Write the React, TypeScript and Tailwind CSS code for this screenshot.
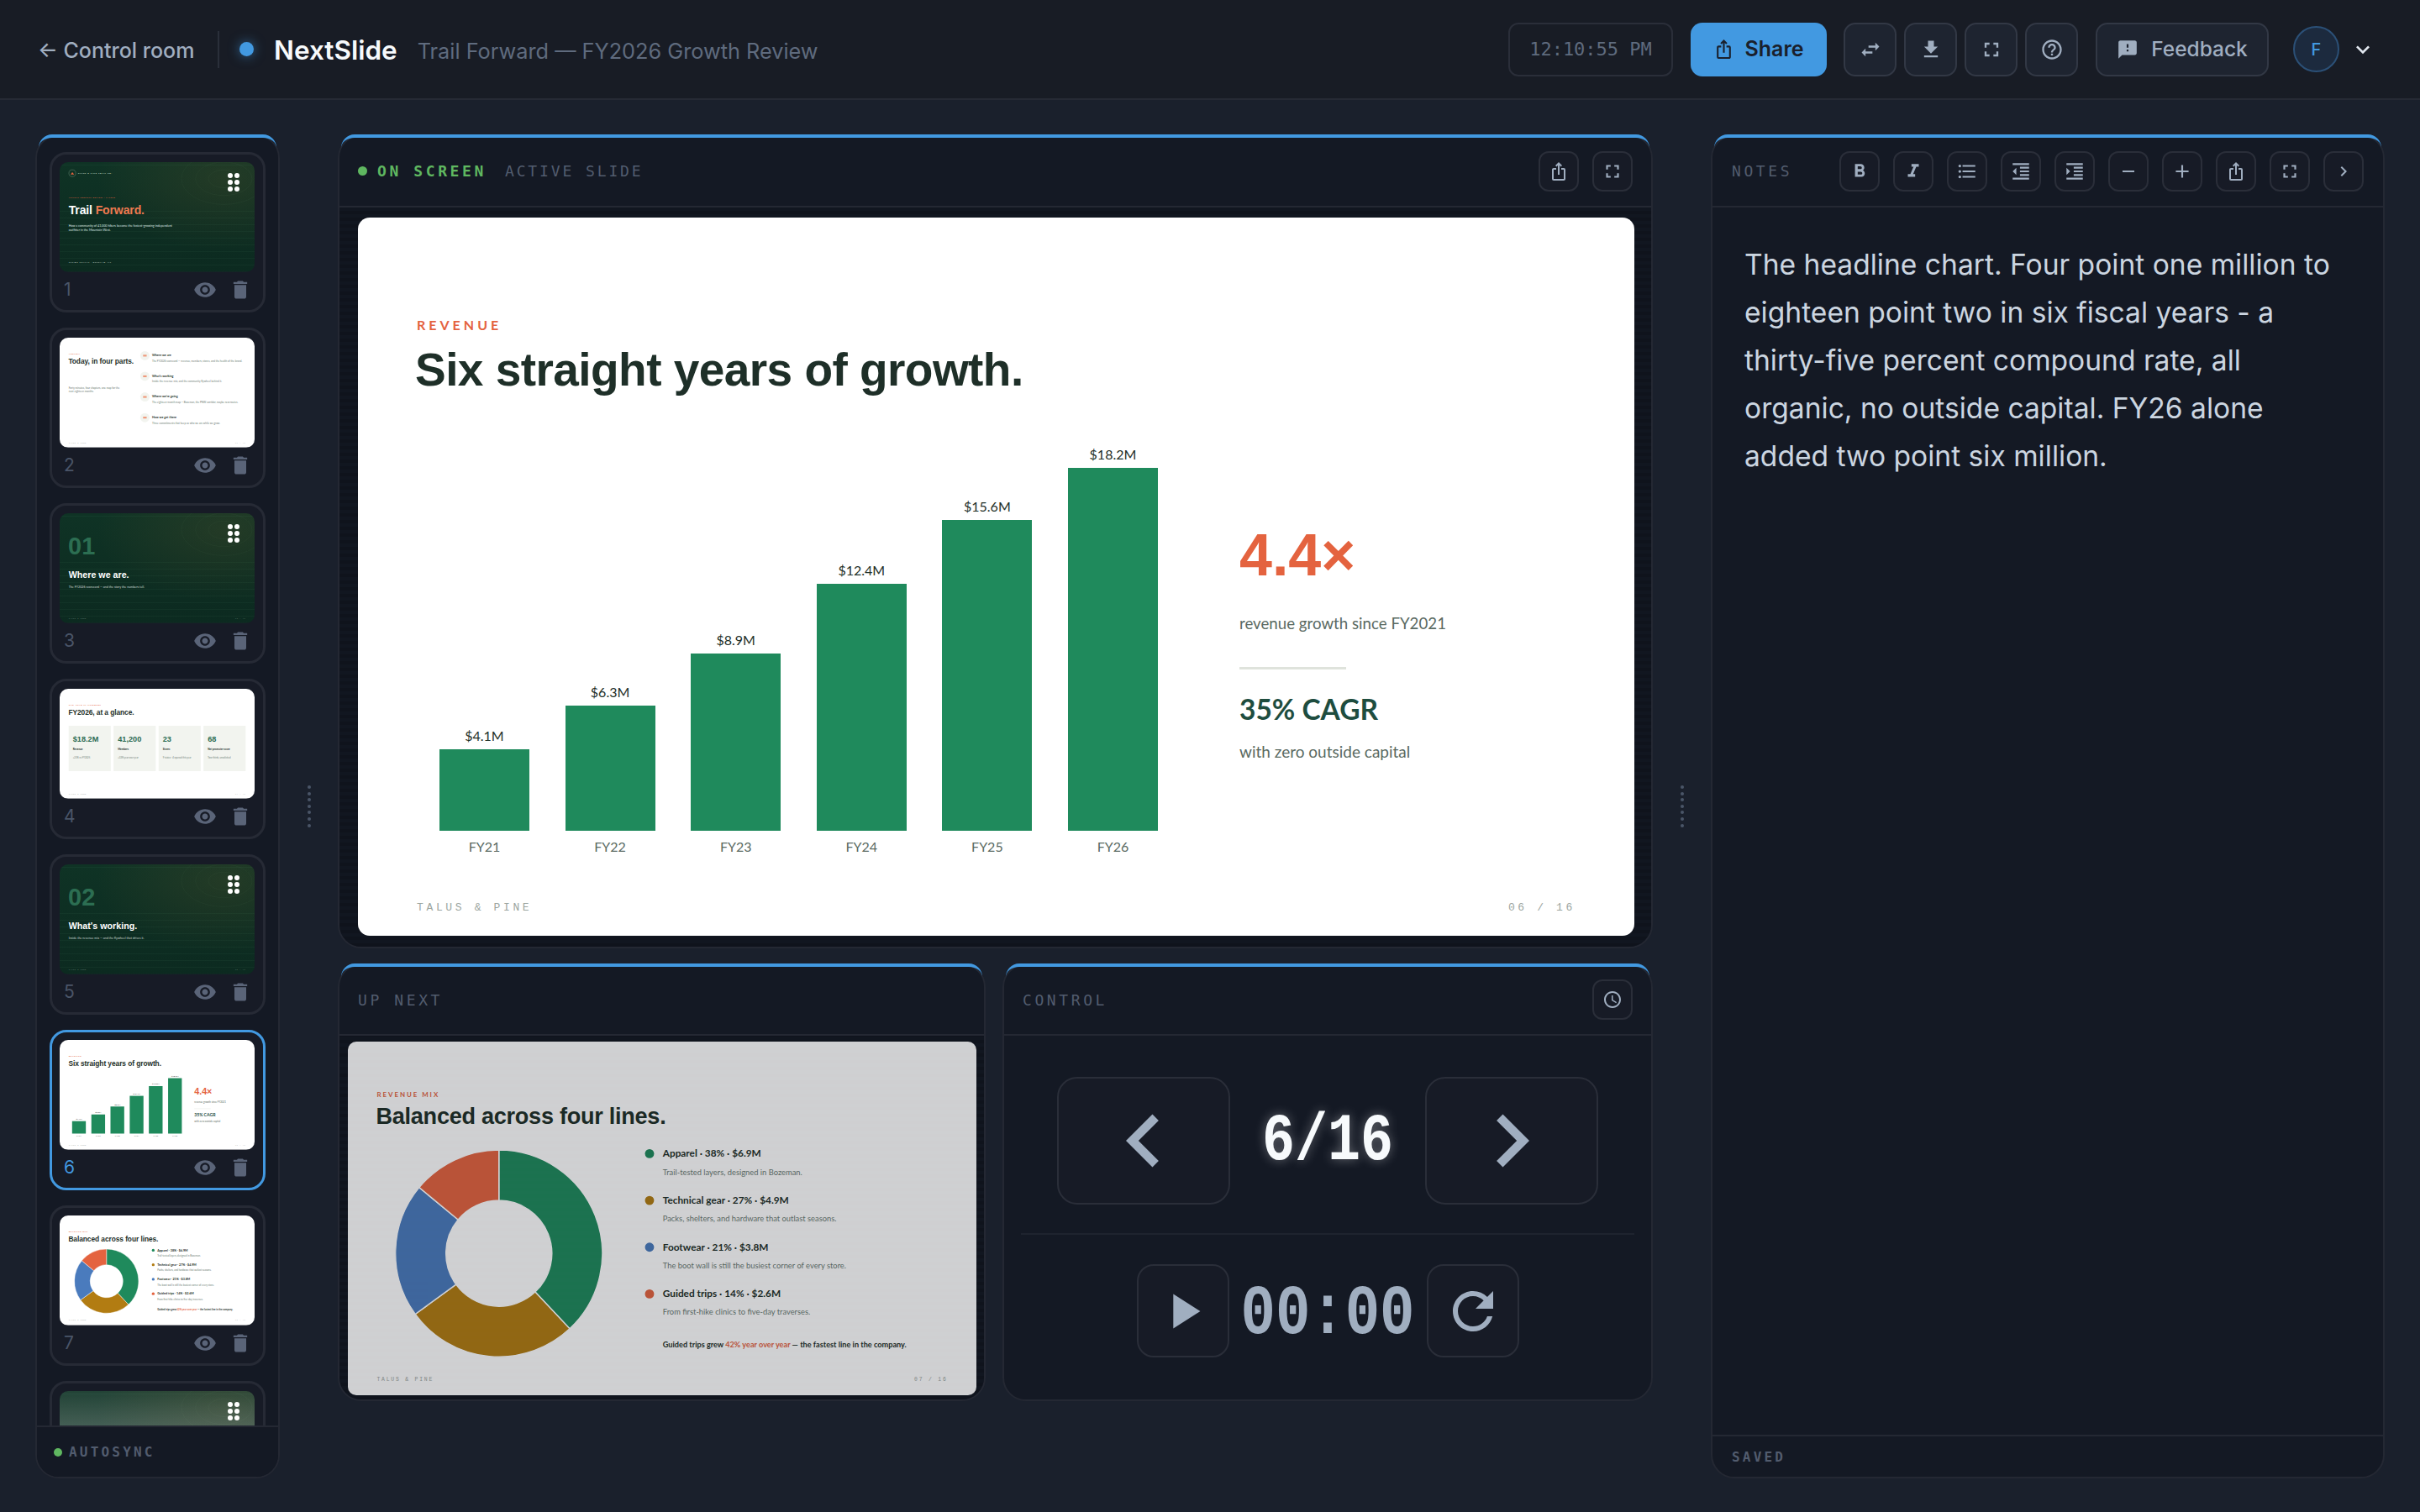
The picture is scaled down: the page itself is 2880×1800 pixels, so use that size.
import React from 'react';
import {
  MdIosShare, MdFullscreen, MdSwapHoriz, MdFileDownload, MdHelpOutline, MdFeedback, MdKeyboardArrowDown,
  MdVisibility, MdDelete, MdFormatBold, MdFormatItalic, MdFormatListBulleted, MdFormatIndentDecrease,
  MdFormatIndentIncrease, MdRemove, MdAdd, MdChevronRight, MdChevronLeft, MdAccessTime, MdPlayArrow, MdRefresh,
} from 'react-icons/md';

const BASE_W = 1519;
const BASE_H = 855;

function Frame({ w, radius, dim, children }: { w: number; radius: string; dim?: boolean; children: React.ReactNode }) {
  const s = w / BASE_W;
  return (
    <div className={`overflow-hidden shrink-0 ${radius} ${dim ? 'opacity-80' : ''}`} style={{ width: w, height: Math.round(BASE_H * s) }}>
      <div className="w-[1519px] h-[855px] origin-top-left" style={{ transform: `scale(${s})` }}>
        {children}
      </div>
    </div>
  );
}

function SlideFooter({ n, dark }: { n: string; dark?: boolean }) {
  return (
    <div className={`flex justify-between px-[70px] text-[13px] leading-[18px] tracking-[0.28em] [font-family:'Liberation_Mono',monospace] ${dark ? 'text-[#6f8f80]' : 'text-[#9ca5a0]'}`}>
      <span>TALUS &amp; PINE</span>
      <span>{n} / 16</span>
    </div>
  );
}

function WhiteHead({ eyebrow, title }: { eyebrow: string; title: string }) {
  return (
    <div className="px-[70px] pt-[117px] whitespace-nowrap">
      <div className="h-[22px] text-[16px] leading-[22px] font-bold tracking-[0.25em] text-[#e4633f] [font-family:'Lato',sans-serif]">{eyebrow}</div>
      <div className="mt-[9px] h-[66px] text-[55px] leading-[66px] font-bold text-[#1e2f28] tracking-[-0.01em] ml-[-2px] [font-family:'Liberation_Sans',sans-serif]">{title}</div>
    </div>
  );
}

const bars = [
  ['FY21', '$4.1M', 97.5], ['FY22', '$6.3M', 149.5], ['FY23', '$8.9M', 211], ['FY24', '$12.4M', 294], ['FY25', '$15.6M', 370], ['FY26', '$18.2M', 432],
] as const;

function SlideRevenue() {
  return (
    <div className="w-full h-full bg-white flex flex-col [font-family:'Lato',sans-serif]">
      <WhiteHead eyebrow="REVENUE" title="Six straight years of growth." />
      <div className="flex items-end h-[545px] pl-[97px]">
        <div className="flex gap-[42.6px] items-end">
          {bars.map(([fy, val, h]) => (
            <div key={fy} className="w-[107px] flex flex-col items-center">
              <div className="text-[16px] leading-[20px] mb-[6px] text-[#1e2f28]">{val}</div>
              <div className="w-full bg-[#1f8a5c]" style={{ height: h }} />
              <div className="mt-[9px] h-[20px] text-[16px] leading-[20px] text-[#5a6a62]">{fy}</div>
            </div>
          ))}
        </div>
        <div className="ml-[97px] self-start mt-[148px] flex flex-col">
          <div className="text-[70px] leading-[80px] font-bold text-[#e4633f] [font-family:'Liberation_Sans',sans-serif]">4.4×</div>
          <div className="mt-[29px] text-[18.7px] leading-[24px] text-[#5a6a62]">revenue growth since FY2021</div>
          <div className="mt-[40px] w-[127px] h-[3px] bg-[#dfe3dc]" />
          <div className="mt-[27px] text-[33.5px] leading-[40px] font-bold text-[#1e4d3f]">35% CAGR</div>
          <div className="mt-[19px] text-[19px] leading-[24px] text-[#5a6a62]">with zero outside capital</div>
        </div>
      </div>
      <div className="mt-[54px]"><SlideFooter n="06" /></div>
    </div>
  );
}

const donut = [
  [0, 0.38, '#1f8a5c'], [0.38, 0.65, '#b27c12'], [0.65, 0.86, '#4a7bbd'], [0.86, 1, '#e4633f'],
] as const;

function arc(a: number, b: number) {
  const R = 250, r = 128, c = 250;
  const p = (t: number, rad: number) => {
    const ang = t * 2 * Math.PI - Math.PI / 2;
    return `${(c + rad * Math.cos(ang)).toFixed(2)} ${(c + rad * Math.sin(ang)).toFixed(2)}`;
  };
  const large = b - a > 0.5 ? 1 : 0;
  return `M${p(a, R)} A${R} ${R} 0 ${large} 1 ${p(b, R)} L${p(b, r)} A${r} ${r} 0 ${large} 0 ${p(a, r)} Z`;
}

const legend = [
  ['#1f8a5c', 'Apparel · 38% · $6.9M', 'Trail-tested layers, designed in Bozeman.'],
  ['#b27c12', 'Technical gear · 27% · $4.9M', 'Packs, shelters, and hardware that outlast seasons.'],
  ['#4a7bbd', 'Footwear · 21% · $3.8M', 'The boot wall is still the busiest corner of every store.'],
  ['#e4633f', 'Guided trips · 14% · $2.6M', 'From first-hike clinics to five-day traverses.'],
] as const;

function SlideMix() {
  return (
    <div className="w-full h-full bg-white flex flex-col [font-family:'Lato',sans-serif]">
      <WhiteHead eyebrow="REVENUE MIX" title="Balanced across four lines." />
      <div className="flex h-[598px] pl-[115px] pt-[48px]">
        <svg width="500" height="500" viewBox="0 0 500 500" className="shrink-0">
          {donut.map(([a, b, c]) => (
            <path key={c} d={arc(a, b)} fill={c} stroke="#fff" strokeWidth="3" />
          ))}
        </svg>
        <div className="ml-[103px] flex flex-col">
          {legend.map(([c, t, d]) => (
            <div key={t} className="h-[113px] flex">
              <div className="w-[22px] h-[22px] rounded-full mt-[-2px] shrink-0" style={{ background: c }} />
              <div className="ml-[21px] whitespace-nowrap">
                <div className="text-[24px] leading-[24px] font-bold text-[#1e2f28] mt-[-4px]">{t}</div>
                <div className="mt-[22px] text-[19px] leading-[22px] text-[#6b7a72]">{d}</div>
              </div>
            </div>
          ))}
          <div className="ml-[43px] mt-[7px] text-[18.6px] leading-[24px] font-bold text-[#1e2f28] whitespace-nowrap">
            Guided trips grew <span className="text-[#e4633f]">42% year over year</span> — the fastest line in the company.
          </div>
        </div>
      </div>
      <div className="mt-[-3px]"><SlideFooter n="07" /></div>
    </div>
  );
}

function DarkBg({ children, lit }: { children?: React.ReactNode; lit?: boolean }) {
  return (
    <div className="relative w-full h-full flex flex-col overflow-hidden bg-[linear-gradient(180deg,#0f3325_0%,#0c2a20_100%)] [font-family:'Liberation_Sans',sans-serif]">
      <div className="absolute inset-0 bg-[radial-gradient(ellipse_at_85%_15%,rgba(180,120,50,0.13),rgba(180,120,50,0)_55%)]" />
      <div className="absolute inset-0 bg-[repeating-linear-gradient(0deg,rgba(120,200,150,0.05)_0px,rgba(120,200,150,0.05)_4px,rgba(0,0,0,0)_4px,rgba(0,0,0,0)_52px)]" />
      <svg className="absolute right-0 top-0" width="800" height="500" viewBox="0 0 800 500" fill="none" stroke="#8fbf9c" strokeOpacity="0.08" strokeWidth="4">
        <ellipse cx="560" cy="130" rx="120" ry="70" /><ellipse cx="560" cy="130" rx="220" ry="130" /><ellipse cx="560" cy="130" rx="330" ry="200" />
      </svg>
      {lit && <div className="absolute inset-0 bg-[linear-gradient(180deg,rgba(255,255,255,0.08)_0%,rgba(255,255,255,0.24)_35%)]" />}
      <div className="relative flex flex-col h-full">{children}</div>
    </div>
  );
}

function SlideCover() {
  return (
    <DarkBg>
      <div className="flex items-center pl-[70px] pt-[58px]">
        <div className="w-[57px] h-[57px] rounded-full border-[4px] border-[#5a7a68] flex items-center justify-center">
          <div className="w-0 h-0 border-x-[14px] border-x-transparent border-b-[18px] border-b-[#e4633f]" />
        </div>
        <div className="ml-[15px] text-[15px] tracking-[0.3em] font-bold text-[#d8e4dc] [font-family:'Lato',sans-serif]">TALUS &amp; PINE TRAIL CO.</div>
      </div>
      <div className="pl-[70px] mt-[152px] text-[15px] leading-[20px] font-bold tracking-[0.24em] text-[#e4633f] [font-family:'Lato',sans-serif]">ANNUAL GROWTH REVIEW · FY2026</div>
      <div className="pl-[70px] mt-[33px] text-[92px] leading-[110px] font-bold text-white tracking-[-0.01em]">Trail <span className="text-[#ee7a50]">Forward.</span></div>
      <div className="pl-[70px] mt-[52px] w-[920px] text-[24px] leading-[32px] text-[#dfe8e2] [font-family:'Lato',sans-serif]">How a community of 41,000 hikers became the fastest-growing independent outfitter in the Mountain West.</div>
      <div className="pl-[70px] mt-[226px] text-[15px] leading-[18px] tracking-[0.25em] text-[#b9c9bf] [font-family:'Lato',sans-serif]">SPRING SUMMIT · BOZEMAN, MT</div>
    </DarkBg>
  );
}

function SlideSection({ num, title, sub, n }: { num: string; title: string; sub: string; n: string }) {
  return (
    <DarkBg>
      <div className="pl-[66px] pt-[150px] text-[190px] leading-[210px] font-bold text-[#2c6e52]">{num}</div>
      <div className="pl-[70px] mt-[76px] text-[70px] leading-[84px] font-bold text-white">{title}</div>
      <div className="pl-[70px] mt-[36px] text-[24px] leading-[32px] text-[#cfdcd4] [font-family:'Lato',sans-serif]">{sub}</div>
      <div className="mt-auto pb-[26px]"><SlideFooter n={n} dark /></div>
    </DarkBg>
  );
}

const agenda = [
  ['Where we are', 'The FY2026 scorecard — revenue, members, stores, and the health of the brand.'],
  ["What's working", 'Inside the revenue mix, and the community flywheel behind it.'],
  ["Where we're going", 'The eighteen-month map — Bozeman, the PNW corridor, maybe new routes.'],
  ['How we get there', 'Three commitments that keep us who we are while we grow.'],
] as const;

function SlideAgenda() {
  return (
    <div className="w-full h-full bg-white flex flex-col [font-family:'Lato',sans-serif]">
      <div className="flex h-[812px]">
        <div className="w-[628px] shrink-0">
          <WhiteHead eyebrow="AGENDA" title="Today, in four parts." />
          <div className="pl-[70px] mt-[164px] w-[490px] text-[20px] leading-[26px] text-[#6b7a72]">Forty minutes, four chapters, one map for the next eighteen months.</div>
        </div>
        <div className="pt-[104px] flex flex-col">
          {agenda.map(([t, d]) => (
            <div key={t} className="h-[161px] flex">
              <div className="w-[72px] h-[72px] rounded-full bg-[#f2f4ef] flex items-center justify-center shrink-0">
                <div className="w-[28px] h-[14px] bg-[#ee9a7c]" />
              </div>
              <div className="ml-[20px] whitespace-nowrap">
                <div className="mt-[16px] text-[24px] leading-[30px] font-bold text-[#1e2f28]">{t}</div>
                <div className="mt-[18px] text-[20px] leading-[26px] text-[#6b7a72]">{d}</div>
              </div>
            </div>
          ))}
        </div>
      </div>
      <SlideFooter n="02" />
    </div>
  );
}

const stats = [
  ['$18.2M', 'Revenue', '+23% vs FY2025'], ['41,200', 'Members', '+32% year over year'],
  ['23', 'Stores', '9 states · 4 opened this year'], ['68', 'Net promoter score', 'Two-thirds, unsolicited'],
] as const;

function SlideGlance() {
  return (
    <div className="w-full h-full bg-white flex flex-col [font-family:'Lato',sans-serif]">
      <WhiteHead eyebrow="THE YEAR IN NUMBERS" title="FY2026, at a glance." />
      <div className="flex gap-[22px] px-[70px] mt-[74px] h-[354px]">
        {stats.map(([v, l, d]) => (
          <div key={l} className="flex-1 bg-[#f2f4ef] px-[33px] pt-[70px]">
            <div className="text-[60px] leading-[70px] font-bold text-[#2b6b52] [font-family:'Liberation_Sans',sans-serif]">{v}</div>
            <div className="mt-[30px] text-[20px] leading-[26px] font-bold text-[#1e2f28] whitespace-nowrap">{l}</div>
            <div className="mt-[41px] text-[18px] leading-[24px] text-[#6b7a72] whitespace-nowrap">{d}</div>
          </div>
        ))}
      </div>
      <div className="mt-[170px]"><SlideFooter n="04" /></div>
    </div>
  );
}

function Grip() {
  return (
    <div className="absolute top-[22px] right-[28px] grid grid-cols-2 gap-x-[2.3px] gap-y-[2.2px]">
      {[0, 1, 2, 3, 4, 5].map((i) => <div key={i} className="w-[6px] h-[6px] rounded-full bg-white" />)}
    </div>
  );
}

const thumbs: { node: React.ReactNode; grip?: boolean }[] = [
  { node: <SlideCover />, grip: true },
  { node: <SlideAgenda /> },
  { node: <SlideSection num="01" title="Where we are." sub="The FY2026 scorecard — and the story the numbers tell." n="03" />, grip: true },
  { node: <SlideGlance /> },
  { node: <SlideSection num="02" title="What's working." sub="Inside the revenue mix — and the flywheel that drives it." n="05" />, grip: true },
  { node: <SlideRevenue /> },
  { node: <SlideMix /> },
  { node: <DarkBg lit />, grip: true },
];

function ThumbCard({ i, node, grip }: { i: number; node: React.ReactNode; grip?: boolean }) {
  const active = i === 5;
  return (
    <div className={`relative shrink-0 h-[191px] rounded-[20px] border-[3px] px-[9px] pt-[9px] bg-[#171b26] ${active ? 'border-[#4299e1]' : 'border-[#262a35]'}`}>
      <Frame w={232} radius="rounded-[10px]">{node}</Frame>
      {grip && <Grip />}
      <div className="flex items-center h-[42px] pl-[5px]">
        <span className={`text-[21px] font-normal ${active ? 'text-[#4299e1]' : 'text-[#4a5568]'}`}>{i + 1}</span>
        <span className="ml-auto text-[#5a6478]"><MdVisibility size={28} /></span>
        <span className="ml-[14px] mr-[4px] text-[#5a6478]"><MdDelete size={28} /></span>
      </div>
    </div>
  );
}

function Panel({ className, children }: { className: string; children: React.ReactNode }) {
  return (
    <section className={`relative flex flex-col rounded-[28px] border-2 border-[#242833] bg-[#141924] ${className}`}>
      <div className="absolute top-[-2px] left-[2px] right-[2px] h-[16px] border-t-[4px] border-[#4299e1] rounded-t-[26px] z-10" />
      <div className="flex-1 min-h-0 flex flex-col overflow-hidden rounded-[26px]">{children}</div>
    </section>
  );
}

const label = "[font-family:'DejaVu_Sans_Mono',monospace] tracking-[0.2em] text-[#525c6e]";

function Tool({ children, className = '' }: { children: React.ReactNode; className?: string }) {
  return (
    <button className={`w-[48px] h-[48px] shrink-0 rounded-[12px] border-2 border-[#2a2e39] bg-[#171b26] text-[#a0aec0] flex items-center justify-center ${className}`}>
      {children}
    </button>
  );
}

function HeadBtn({ children }: { children: React.ReactNode }) {
  return (
    <button className="w-[63px] h-[64px] rounded-[14px] border-2 border-[#323845] bg-[#1e2430] text-[#a0aec0] flex items-center justify-center">
      {children}
    </button>
  );
}

function Handle() {
  return (
    <div className="flex-1 flex flex-col items-center gap-[3.6px] pt-[775px]">
      {[0, 1, 2, 3, 4, 5, 6].map((i) => <div key={i} className="w-[4px] h-[4px] rounded-full bg-[#4a5568]" />)}
    </div>
  );
}

const stage = "bg-[repeating-linear-gradient(0deg,#0f131c_0px,#0f131c_4px,#111620_4px,#111620_8px)]";

export default function App() {
  return (
    <div className="w-[2880px] h-[1800px] overflow-hidden bg-[#1a202c] flex flex-col [font-family:'Inter',sans-serif]">
      <header className="h-[119px] shrink-0 bg-[#181c25] border-b-2 border-[#262a35] flex items-center pl-[45px] pr-[52px]">
        <div className="mt-[4px] text-[25px] font-medium text-[#a0aec0] w-[214px] whitespace-nowrap">← Control room</div>
        <div className="w-[2px] h-[44px] bg-[#2a2f3a]" />
        <div className="ml-[24px] w-[17px] h-[17px] rounded-full bg-[#4299e1] shadow-[0_0_14px_rgba(66,153,225,0.6)]" />
        <div className="mt-[2px] ml-[24px] text-[31.5px] font-semibold text-[#f7fafc]">NextSlide</div>
        <div className="mt-[4px] ml-[24px] text-[25.3px] text-[#5f6b7e]">Trail Forward — FY2026 Growth Review</div>
        <div className="ml-auto flex items-center">
          <div className="w-[196px] h-[64px] rounded-[12px] border-2 border-[#2a2e39] flex items-center justify-center text-[22px] text-[#5f6b7e] [font-family:'DejaVu_Sans_Mono',monospace]">12:10:55 PM</div>
          <button className="ml-[21px] w-[162px] h-[64px] rounded-[14px] bg-[#4299e1] text-[#1a202c] flex items-center justify-center gap-[12px] text-[25px] font-semibold">
            <MdIosShare size={25} />Share
          </button>
          <div className="ml-[20px] flex gap-[9px]">
            <HeadBtn><MdSwapHoriz size={28} /></HeadBtn>
            <HeadBtn><MdFileDownload size={28} /></HeadBtn>
            <HeadBtn><MdFullscreen size={28} /></HeadBtn>
            <HeadBtn><MdHelpOutline size={28} /></HeadBtn>
          </div>
          <button className="ml-[21px] w-[206px] h-[64px] rounded-[14px] border-2 border-[#323845] bg-[#1e2430] text-[#a0aec0] flex items-center justify-center gap-[15px] text-[24.5px] font-medium">
            <MdFeedback size={26} />Feedback
          </button>
          <div className="ml-[29px] w-[55px] h-[55px] rounded-full bg-[#1c2a3e] border-2 border-[#2b5077] text-[#4299e1] flex items-center justify-center text-[20px] font-medium">F</div>
          <span className="ml-[12px] text-[#e2e8f0]"><MdKeyboardArrowDown size={32} /></span>
        </div>
      </header>

      <main className="flex-1 flex pl-[42px] pr-[42px] pt-[41px] pb-[40px] items-start">
        <Panel className="w-[291px] h-[1600px] shrink-0">
          <div className="flex-1 min-h-0 overflow-hidden flex flex-col gap-[18px] pl-[15px] pr-[15px] pt-[19px]">
            {thumbs.map((t, i) => <ThumbCard key={i} i={i} node={t.node} grip={t.grip} />)}
          </div>
          <div className="h-[61px] shrink-0 border-t-2 border-[#242833] flex items-center pl-[20px] bg-[#141924]">
            <div className="w-[10px] h-[10px] rounded-full bg-[#5fb760]" />
            <span className={`ml-[8px] text-[16px] font-bold ${label}`}>AUTOSYNC</span>
          </div>
        </Panel>
        <div className="w-[69px] shrink-0 self-stretch flex"><Handle /></div>

        <div className="w-[1565px] shrink-0 flex flex-col gap-[18px]">
          <Panel className="h-[969px]">
            <div className="h-[85px] shrink-0 border-b-2 border-[#242833] flex items-center pl-[22px] pr-[22px]">
              <div className="w-[11px] h-[11px] rounded-full bg-[#5fb760]" />
              <span className="ml-[12px] text-[18px] font-bold [font-family:'DejaVu_Sans_Mono',monospace] tracking-[0.2em] text-[#5fb760]">ON SCREEN</span>
              <span className="ml-[22px] text-[18px] [font-family:'DejaVu_Sans_Mono',monospace] tracking-[0.16em] text-[#525c6e]">ACTIVE SLIDE</span>
              <div className="ml-auto flex gap-[16px]">
                <Tool><MdIosShare size={24} /></Tool>
                <Tool><MdFullscreen size={26} /></Tool>
              </div>
            </div>
            <div className={`flex-1 px-[22px] pt-[12px] ${stage}`}>
              <Frame w={1519} radius="rounded-[14px]"><SlideRevenue /></Frame>
            </div>
          </Panel>
          <div className="flex gap-[20px] h-[521px]">
            <Panel className="w-[771px]">
              <div className="h-[84px] shrink-0 border-b-2 border-[#242833] flex items-center pl-[22px]">
                <span className={`text-[18px] ${label}`}>UP NEXT</span>
              </div>
              <div className={`flex-1 pl-[10px] pt-[7px] ${stage}`}>
                <Frame w={748} radius="rounded-[10px]" dim><SlideMix /></Frame>
              </div>
            </Panel>
            <Panel className="w-[774px]">
              <div className="h-[84px] shrink-0 border-b-2 border-[#242833] flex items-center pl-[22px] pr-[22px] justify-between">
                <span className={`text-[18px] ${label}`}>CONTROL</span>
                <Tool><MdAccessTime size={24} /></Tool>
              </div>
              <div className="h-[237px] pt-[14px] mx-[20px] border-b-2 border-[#1f232e] flex items-center justify-center gap-[26px]">
                <button className="w-[206px] h-[152px] rounded-[24px] border-2 border-[#2a2e39] bg-[#171b26] text-[#a0aec0] flex items-center justify-center"><MdChevronLeft size={126} /></button>
                <div className="w-[180px] mt-[5px] text-center text-[65px] font-bold text-[#f7fafc] scale-y-[1.22] [font-family:'Liberation_Mono',monospace] [text-shadow:0_0_12px_rgba(255,255,255,0.35)]">6/16</div>
                <button className="w-[206px] h-[152px] rounded-[24px] border-2 border-[#2a2e39] bg-[#171b26] text-[#a0aec0] flex items-center justify-center"><MdChevronRight size={126} /></button>
              </div>
              <div className="flex-1 flex items-start justify-center gap-[18px] pt-[35px]">
                <button className="w-[110px] h-[111px] rounded-[20px] border-2 border-[#2a2e39] bg-[#171b26] text-[#a0aec0] flex items-center justify-center"><MdPlayArrow size={70} /></button>
                <div className="w-[199px] h-[111px] mt-[5px] flex items-center justify-center text-[69px] font-bold text-[#a0aec0] scale-y-[1.22] [font-family:'Liberation_Mono',monospace]">00:00</div>
                <button className="w-[110px] h-[111px] rounded-[20px] border-2 border-[#2a2e39] bg-[#171b26] text-[#a0aec0] flex items-center justify-center"><MdRefresh size={72} /></button>
              </div>
            </Panel>
          </div>
        </div>

        <div className="w-[69px] shrink-0 self-stretch flex"><Handle /></div>
        <Panel className="w-[802px] h-[1600px] shrink-0">
          <div className="h-[85px] shrink-0 border-b-2 border-[#242833] flex items-center pl-[23px] pr-[23px]">
            <span className={`text-[18px] ${label}`}>NOTES</span>
            <div className="ml-auto flex gap-[16px]">
              <Tool><MdFormatBold size={26} /></Tool>
              <Tool><MdFormatItalic size={26} /></Tool>
              <Tool><MdFormatListBulleted size={26} /></Tool>
              <Tool><MdFormatIndentDecrease size={26} /></Tool>
              <Tool><MdFormatIndentIncrease size={26} /></Tool>
              <Tool><MdRemove size={24} /></Tool>
              <Tool><MdAdd size={26} /></Tool>
              <Tool><MdIosShare size={24} /></Tool>
              <Tool><MdFullscreen size={26} /></Tool>
              <Tool><MdChevronRight size={24} /></Tool>
            </div>
          </div>
          <div className="flex-1 px-[38px] pt-[39px] text-[33.6px] leading-[57px] text-[#cbd5e0]">
            The headline chart. Four point one million to eighteen point two in six fiscal years - a thirty-five percent compound rate, all organic, no outside capital. FY26 alone added two point six million.
          </div>
          <div className="h-[50px] shrink-0 border-t-2 border-[#242833] flex items-center pl-[23px] pt-[2px]">
            <span className={`text-[16px] font-bold ${label}`}>SAVED</span>
          </div>
        </Panel>
      </main>
    </div>
  );
}
